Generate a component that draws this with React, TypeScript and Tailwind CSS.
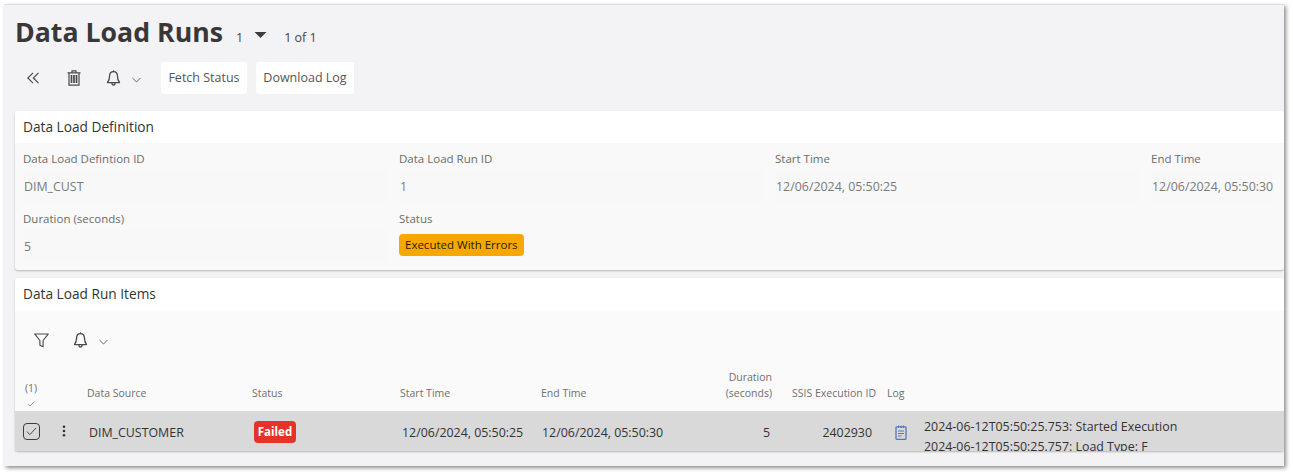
import React from "react";

const Bell = ({ className = "" }: { className?: string }) => (
  <svg viewBox="0 0 16 18" className={className} fill="none" stroke="#4a4a4a" strokeWidth="1.400" strokeLinejoin="round" strokeLinecap="round">
    <path d="M8 1.600c-2.800 0-4.200 2.200-4.200 4.800 0 3.400-.6 5-2.200 6.900h12.800c-1.600-1.900-2.200-3.500-2.200-6.900C12.200 3.800 10.800 1.600 8 1.600z" />
    <path d="M6.300 13.500c0 1.500.7 2.500 1.700 2.500s1.700-1 1.700-2.500" />
    <path d="M8 1.600V.8" />
  </svg>
);

const Chevron = () => (
  <svg viewBox="0 0 10 6" className="w-[9px] h-[6px]" fill="none" stroke="#555" strokeWidth="1">
    <path d="M.5.7 5 5.200 9.500.7" />
  </svg>
);

const Field = ({ label, value }: { label: string; value: string }) => (
  <div className="flex flex-col">
    <div className="text-[11.500px] leading-[16px] text-[#6b6b6b] whitespace-nowrap">{label}</div>
    <div className="mt-[3px] mr-[12px] pl-[1px] h-[32px] flex items-center pt-[3px] text-[12.400px] text-[#7a7a7a] bg-[#f8f8f8] whitespace-nowrap">{value}</div>
  </div>
);

const headCls = "text-[10.500px] leading-[16px] text-[#6f6f6f]";

export default function App() {
  return (
    <div className="w-[1293px] h-[475px] bg-white overflow-hidden" style={{ fontFamily: '"Open Sans", sans-serif' }}>
      <div className="ml-[4px] mt-[4px] w-[1280px] h-[462px] bg-[#f3f2f5] border-t border-[#dddddd] shadow-[2px_2px_4px_rgba(0,0,0,0.45)] overflow-hidden pl-[11px]">
        <div className="h-[54px] flex items-center">
          <h1 className="text-[26.700px] leading-[40px] font-bold text-[#383838]">Data Load Runs</h1>
          <span className="ml-[13px] mt-[13px] text-[12.500px] text-[#444]">1</span>
          <svg viewBox="0 0 12 6" className="ml-[11px] mt-[5px] w-[13px] h-[6px]"><path d="M0 0h12L6 6z" fill="#3d3d3d" /></svg>
          <span className="ml-[17px] mt-[13px] text-[12.500px] text-[#444]">1 of 1</span>
        </div>

        <div className="h-[32px] mt-[3px] flex items-center">
          <svg viewBox="0 0 12 12" className="ml-[12px] w-[12px] h-[12px]" fill="none" stroke="#4a4a4a" strokeWidth="1.200">
            <path d="M6 .8.8 6 6 11.200M11.500.8 6.300 6l5.200 5.200" />
          </svg>
          <svg viewBox="0 0 14 16" className="ml-[28px] w-[14px] h-[16px]" fill="none" stroke="#4a4a4a" strokeWidth="1.200">
            <path d="M.5 2.800h13M5 2.600V.8h4v1.800M2 2.800v12.400h10V2.800" />
            <path d="M4.500 5v8M7 5v8M9.500 5v8" strokeWidth="1.700" />
          </svg>
          <Bell className="ml-[25px] w-[15px] h-[17px]" />
          <span className="ml-[11px] mt-[3px] flex"><Chevron /></span>
          <button className="ml-[20px] h-[32px] w-[86px] rounded-[3px] bg-white text-[12.500px] text-[#555]">Fetch Status</button>
          <button className="ml-[9px] h-[32px] w-[98px] rounded-[3px] bg-white text-[12.500px] text-[#555]">Download Log</button>
        </div>

        <section className="mt-[17px] h-[159px] rounded-[3px] bg-[#f9f9f9] shadow-[0_1px_2px_rgba(0,0,0,0.25)] overflow-hidden">
          <div className="h-[32px] bg-white pl-[8px] flex items-center text-[13.700px] font-medium text-[#333333]">Data Load Definition</div>
          <div className="grid grid-cols-[376px_376px_376px_1fr] pl-[8px] pt-[8px] gap-y-[9px]">
            <Field label="Data Load Defintion ID" value="DIM_CUST" />
            <Field label="Data Load Run ID" value="1" />
            <Field label="Start Time" value="12/06/2024, 05:50:25" />
            <Field label="End Time" value="12/06/2024, 05:50:30" />
            <Field label="Duration (seconds)" value="5" />
            <div className="flex flex-col">
              <div className="text-[11.500px] leading-[16px] text-[#6b6b6b]">Status</div>
              <div className="mt-[4px]">
                <span className="inline-flex items-center h-[22px] px-[6px] rounded-[4px] bg-[#f7a800] text-[11.500px] font-medium text-[#1f1f00]">Executed With Errors</span>
              </div>
            </div>
          </div>
        </section>

        <section className="mt-[8px] h-[173px] rounded-[3px] bg-[#fafafa] shadow-[0_1px_2px_rgba(0,0,0,0.25)] overflow-hidden">
          <div className="h-[33px] bg-white pl-[8px] flex items-center text-[13.700px] font-medium text-[#333333]">Data Load Run Items</div>
          <div className="h-[58px] flex items-center pl-[19px]">
            <svg viewBox="0 0 16 16" className="w-[15px] h-[15px]" fill="none" stroke="#4a4a4a" strokeWidth="1.200" strokeLinejoin="round">
              <path d="M.7 1h14.600L9.700 8v6.700L6.300 13V8z" />
            </svg>
            <Bell className="ml-[24px] w-[15px] h-[17px]" />
            <span className="ml-[11px] mt-[3px] flex"><Chevron /></span>
          </div>
          <div className="h-[42px] flex items-end pb-[2px]">
            <div className={`${headCls} w-[32px] text-center flex flex-col items-center`}>
              <span className="text-[10.500px] leading-[15px]">(1)</span>
              <svg viewBox="0 0 10 8" className="mt-[5px] mb-[2px] w-[8px] h-[6px]" fill="none" stroke="#777" strokeWidth="1"><path d="M.8 4 3.500 6.800 9.200 1" /></svg>
            </div>
            <div className={`${headCls} ml-[40px] w-[165px] mb-[8px]`}>Data Source</div>
            <div className={`${headCls} w-[148px] mb-[8px]`}>Status</div>
            <div className={`${headCls} w-[141px] mb-[8px]`}>Start Time</div>
            <div className={`${headCls} w-[161px] mb-[8px]`}>End Time</div>
            <div className={`${headCls} w-[70px] text-right mb-[8px]`}>Duration<br />(seconds)</div>
            <div className={`${headCls} ml-[20px] w-[95px] mb-[8px] whitespace-nowrap`}>SSIS Execution ID</div>
            <div className={`${headCls} mb-[8px]`}>Log</div>
          </div>
          <div className="h-[40px] bg-[#d9d9d9] flex overflow-hidden text-[12.400px] text-[#333]">
            <div className="w-[32px] flex items-center justify-center pl-[1px]">
              <span className="w-[17px] h-[17px] rounded-[4px] border-[1.500px] border-[#3d3d3d] flex items-center justify-center">
                <svg viewBox="0 0 12 10" className="w-[11px] h-[9px]" fill="none" stroke="#3d3d3d" strokeWidth="1"><path d="M1 5l3.200 3.500L11 1" /></svg>
              </span>
            </div>
            <div className="w-[33px] flex items-center justify-center">
              <svg viewBox="0 0 4 14" className="w-[4px] h-[12px]" fill="#333"><circle cx="2" cy="2" r="1.500" /><circle cx="2" cy="7" r="1.500" /><circle cx="2" cy="12" r="1.500" /></svg>
            </div>
            <div className="w-[174px] pl-[9px] flex items-center pt-[5px]">DIM_CUSTOMER</div>
            <div className="w-[148px] flex items-center pt-[1px]">
              <span className="h-[22px] w-[42px] rounded-[4px] bg-[#e5332a] flex items-center justify-center text-[11.500px] font-bold text-white">Failed</span>
            </div>
            <div className="w-[140px] flex items-center pt-[5px] whitespace-nowrap">12/06/2024, 05:50:25</div>
            <div className="w-[171px] flex items-center pt-[5px] whitespace-nowrap">12/06/2024, 05:50:30</div>
            <div className="w-[57px] flex items-center justify-end pt-[5px]">5</div>
            <div className="w-[102px] flex items-center justify-end pt-[5px]">2402930</div>
            <div className="w-[51px] flex items-center justify-center pl-[6px] pt-[3px]">
              <svg viewBox="0 0 12 15" className="w-[12px] h-[15px]" fill="none" stroke="#4a78c8" strokeWidth="1.300">
                <rect x="1" y="1.800" width="10" height="12.500" rx=".8" />
                <path d="M3.500.5v2.500M6 .5v2.500M8.500.5v2.500M3 6h6M3 8.500h6M3 11h3.500" strokeWidth="1.100" />
              </svg>
            </div>
            <div className="pl-[1px] pt-[6px] leading-[20px] whitespace-nowrap">
              2024-06-12T05:50:25.753: Started Execution<br />2024-06-12T05:50:25.757: Load Type: F
            </div>
          </div>
        </section>
      </div>
    </div>
  );
}
